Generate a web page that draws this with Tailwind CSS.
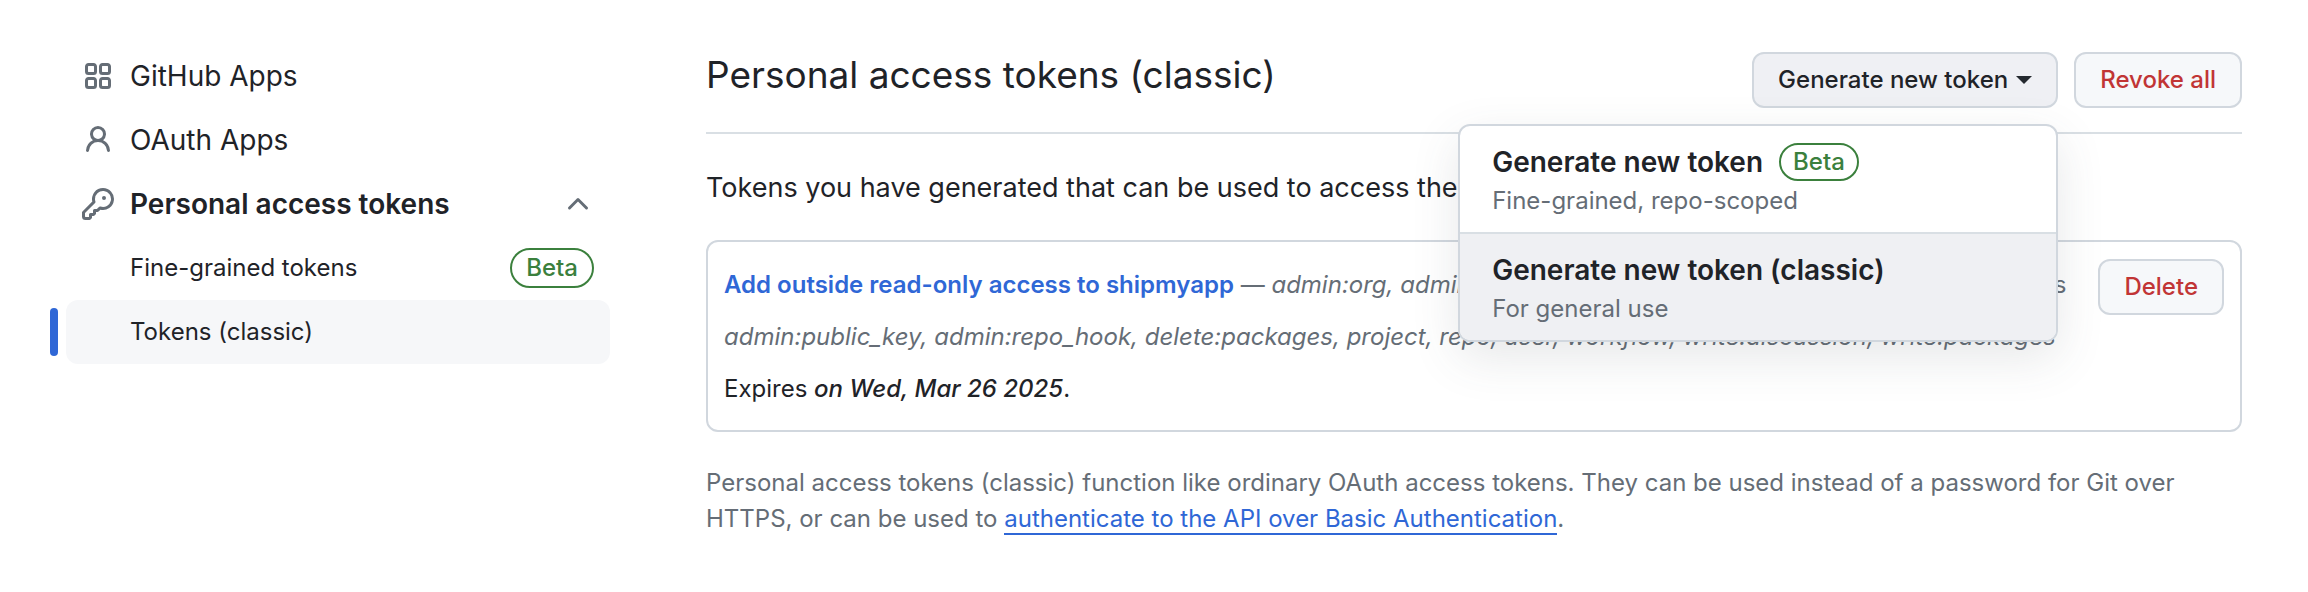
<!DOCTYPE html>
<html lang="en">
<head>
<meta charset="utf-8">
<meta name="viewport" content="width=device-width, initial-scale=1">
<title>Personal access tokens (classic)</title>
<script src="https://cdn.jsdelivr.net/npm/@tailwindcss/browser@4"></script>
</head>
<body class="bg-white font-[Inter,sans-serif] text-[24px] leading-9 text-[#1f2328]">
<div class="flex items-start gap-24 pt-11 pr-[66px] pb-14 pl-[66px]">
  <nav class="w-[544px] shrink-0 text-[28px]" aria-label="Developer settings">
    <ul>
      <li><a href="#" class="flex h-16 items-center gap-4 px-4">
        <svg class="size-8 shrink-0 fill-[#656d76]" viewBox="0 0 16 16" aria-hidden="true"><path d="M1.5 3.25c0-.966.784-1.75 1.75-1.75h2.5c.966 0 1.75.784 1.75 1.75v2.5A1.75 1.75 0 0 1 5.75 7.5h-2.5A1.75 1.75 0 0 1 1.5 5.75Zm7 0c0-.966.784-1.75 1.75-1.75h2.5c.966 0 1.75.784 1.75 1.75v2.5a1.75 1.75 0 0 1-1.75 1.75h-2.5A1.75 1.75 0 0 1 8.5 5.75Zm-7 7c0-.966.784-1.75 1.75-1.75h2.5c.966 0 1.75.784 1.75 1.75v2.5a1.75 1.75 0 0 1-1.75 1.75h-2.5a1.75 1.75 0 0 1-1.75-1.75Zm7 0c0-.966.784-1.75 1.75-1.75h2.5c.966 0 1.75.784 1.75 1.75v2.5a1.75 1.75 0 0 1-1.75 1.75h-2.5a1.75 1.75 0 0 1-1.75-1.75ZM3.25 3a.25.25 0 0 0-.25.25v2.5c0 .138.112.25.25.25h2.5A.25.25 0 0 0 6 5.75v-2.5A.25.25 0 0 0 5.75 3Zm7 0a.25.25 0 0 0-.25.25v2.5c0 .138.112.25.25.25h2.5a.25.25 0 0 0 .25-.25v-2.5a.25.25 0 0 0-.25-.25Zm-7 7a.25.25 0 0 0-.25.25v2.5c0 .138.112.25.25.25h2.5a.25.25 0 0 0 .25-.25v-2.5a.25.25 0 0 0-.25-.25Zm7 0a.25.25 0 0 0-.25.25v2.5c0 .138.112.25.25.25h2.5a.25.25 0 0 0 .25-.25v-2.5a.25.25 0 0 0-.25-.25Z"/></svg>
        GitHub Apps</a></li>
      <li><a href="#" class="flex h-16 items-center gap-4 px-4">
        <svg class="size-8 shrink-0 fill-[#656d76]" viewBox="0 0 16 16" aria-hidden="true"><path d="M10.561 8.073a6.005 6.005 0 0 1 3.432 5.142.75.75 0 1 1-1.498.07 4.5 4.5 0 0 0-8.99 0 .75.75 0 0 1-1.498-.07 6.004 6.004 0 0 1 3.431-5.142 3.999 3.999 0 1 1 5.123 0ZM10.5 5a2.5 2.5 0 1 0-5 0 2.5 2.5 0 0 0 5 0Z"/></svg>
        OAuth Apps</a></li>
      <li>
        <button type="button" aria-expanded="true" class="flex h-16 w-full items-center gap-4 px-4 text-left font-semibold">
          <svg class="size-8 shrink-0 fill-[#656d76]" viewBox="0 0 16 16" aria-hidden="true"><path d="M10.5 0a5.499 5.499 0 1 1-1.288 10.848l-.932.932a.749.749 0 0 1-.53.22H7v.75a.749.749 0 0 1-.22.53l-.5.5a.749.749 0 0 1-.53.22H5v.75a.749.749 0 0 1-.22.53l-.5.5a.749.749 0 0 1-.53.22h-2A1.75 1.75 0 0 1 0 14.25v-2c0-.199.079-.389.22-.53l4.932-4.932A5.5 5.5 0 0 1 10.5 0Zm-4 5.5c-.001.431.069.86.205 1.269a.75.75 0 0 1-.181.768L1.5 12.56v1.69c0 .138.112.25.25.25h1.69l.06-.06v-1.19a.75.75 0 0 1 .75-.75h1.19l.06-.06v-1.19a.75.75 0 0 1 .75-.75h1.19l1.023-1.025a.75.75 0 0 1 .768-.18A4 4 0 1 0 6.5 5.5ZM11 6a1 1 0 1 1 0-2 1 1 0 0 1 0 2Z"/></svg>
          <span class="grow">Personal access tokens</span>
          <svg class="size-8 shrink-0 fill-[#656d76]" viewBox="0 0 16 16" aria-hidden="true"><path d="M3.22 10.53a.749.749 0 0 1 0-1.06l4.25-4.25a.749.749 0 0 1 1.06 0l4.25 4.25a.749.749 0 1 1-1.06 1.06L8 6.811 4.28 10.53a.749.749 0 0 1-1.06 0Z"/></svg>
        </button>
        <ul class="text-[24px]">
          <li><a href="#" class="flex h-16 items-center justify-between pr-4 pl-16">Fine-grained tokens
            <span class="flex h-10 items-center rounded-full border-2 border-[#3b803d] px-[14px] font-medium text-[#3b803d]">Beta</span></a></li>
          <li class="relative"><span class="absolute top-2 -left-4 h-12 w-2 rounded-full bg-[#2f67d6]"></span>
            <a href="#" aria-current="page" class="flex h-16 items-center rounded-xl bg-[#f6f7f9] pl-16">Tokens (classic)</a></li>
        </ul>
      </li>
    </ul>
  </nav>

  <main class="min-w-0 grow">
    <header class="flex items-start justify-between border-b-2 border-[#d9dfe4] pt-2 pb-6">
      <h1 class="text-[37px] leading-[46px]">Personal access tokens (classic)</h1>
      <div class="flex gap-4 font-medium">
        <div class="relative">
          <button type="button" aria-haspopup="menu" aria-expanded="true" class="flex h-14 items-center gap-2 rounded-xl border-2 border-[#d1d7de] bg-[#eff0f4] px-6">Generate new token
            <span class="border-x-8 border-t-8 border-x-transparent border-t-[#24292f]"></span></button>
          <div role="menu" class="absolute top-[72px] right-0 z-10 w-[600px] overflow-hidden rounded-xl border-2 border-[#d1d7de] bg-white shadow-[0_16px_48px_rgba(66,74,83,0.13)]">
            <a href="#" role="menuitem" class="flex flex-col border-b-2 border-[#d9dfe4] px-8 pt-4 pb-3">
              <span class="flex items-center gap-4 text-[28px] leading-10 font-semibold">Generate new token
                <span class="flex h-[38px] items-center rounded-full border-2 border-[#3b803d] px-3 text-[24px] font-medium text-[#3b803d]">Beta</span></span>
              <span class="leading-[38px] font-normal text-[#656d76]">Fine-grained, repo-scoped</span></a>
            <a href="#" role="menuitem" class="flex flex-col bg-[#eff0f3] px-8 pt-4 pb-3">
              <span class="text-[28px] leading-10 font-semibold">Generate new token (classic)</span>
              <span class="leading-[38px] font-normal text-[#656d76]">For general use</span></a>
          </div>
        </div>
        <button type="button" class="h-14 rounded-xl border-2 border-[#d1d7de] bg-[#f6f8fa] px-6 text-[#c13535]">Revoke all</button>
      </div>
    </header>

    <p class="mt-8 text-[27px] leading-11">Tokens you have generated that can be used to access the <a href="#" class="text-[#2f67d6]">GitHub API</a>.</p>

    <section class="mt-[30px] flex items-start gap-8 rounded-xl border-2 border-[#d1d7de] px-4 pt-[17px] pb-[15px]">
      <div class="min-w-0 grow leading-[52px]">
        <span class="float-right text-[#656d76]">Last used within the last 2 months</span>
        <p class="text-[#656d76]"><a href="#" class="font-semibold text-[#2f67d6]">Add outside read-only access to shipmyapp</a> — <em>admin:org, admin:org_hook, admin:public_key, admin:repo_hook, delete:packages, project, repo, user, workflow, write:discussion, write:packages</em></p>
        <p>Expires <em class="font-medium">on Wed, Mar 26 2025</em>.</p>
      </div>
      <button type="button" class="h-14 shrink-0 rounded-xl border-2 border-[#d1d7de] bg-[#f6f8fa] px-6 font-medium text-[#c13535]">Delete</button>
    </section>

    <p class="mt-[33px] text-[#656d76]">Personal access tokens (classic) function like ordinary OAuth access tokens. They can be used instead of a password for Git over HTTPS, or can be used to <a href="#" class="border-b-2 border-[#2f67d6] text-[#2f67d6]">authenticate to the API over Basic Authentication</a>.</p>
  </main>
</div>
</body>
</html>
